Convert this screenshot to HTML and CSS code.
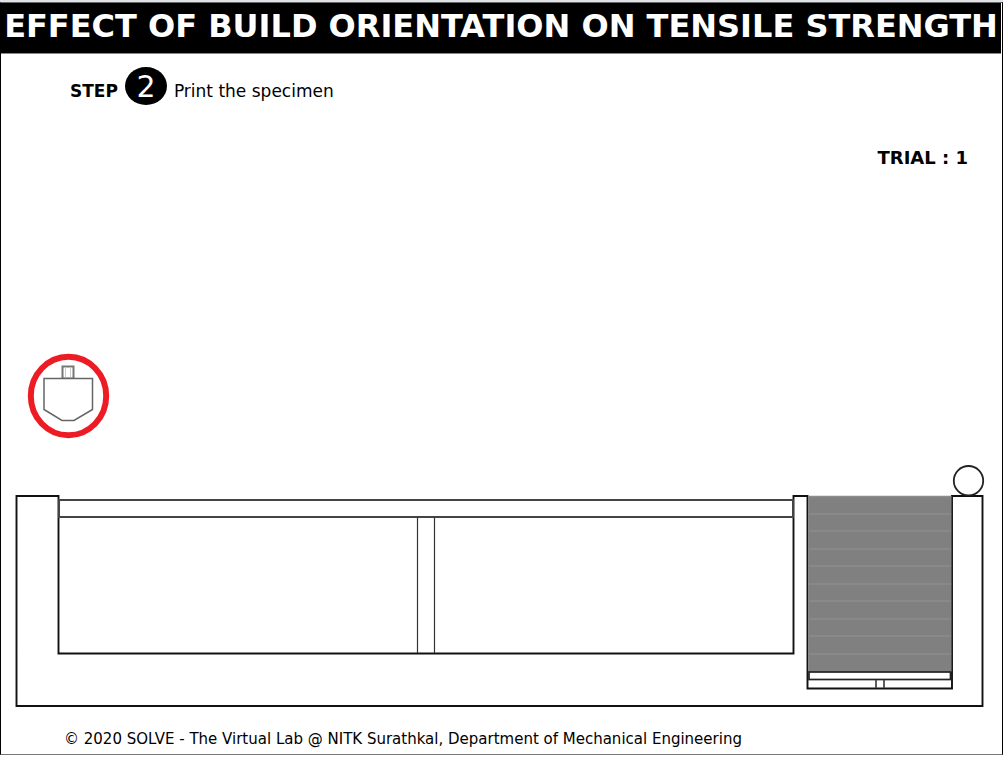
FILE: index.html
```html
<!DOCTYPE html>
<html lang="en">
<head>
<meta charset="utf-8">
<title>Effect of Build Orientation on Tensile Strength</title>
<link rel="stylesheet" href="styles.css">
</head>
<body>
<div class="lab">
  <header class="lab-header"><h1 class="lab-title">EFFECT OF BUILD ORIENTATION ON TENSILE STRENGTH</h1></header>
  <main class="lab-main">
    <div class="step">
      <strong class="step-label">STEP</strong>
      <span class="step-number">2</span>
      <span class="step-text">Print the specimen</span>
    </div>
    <p class="trial">TRIAL : 1</p>
    <svg class="printer" viewBox="0 340 1001 375" role="img" aria-label="Powder bed printer with print head, build chamber, powder supply and roller">
      <g fill="#fff" stroke="#666" stroke-width="1.5">
        <rect x="61.5" y="366.5" width="11" height="12" stroke="#777" stroke-width="2"/>
        <path d="M64.5 367V378M69.500 367V378" stroke="#ccc" stroke-width="1"/>
        <path d="M43 378.500H91.500V409.500L73 420.500H61L43 409.500Z"/>
      </g>
      <ellipse cx="67.500" cy="396" rx="37.700" ry="39.200" fill="none" stroke="#ed1c24" stroke-width="6"/>
      <path d="M15.500 496H57.500V653.500H792.500V496H806.500V688.500H951V496H981.500V706H15.500Z" fill="#fff" stroke="#111" stroke-width="1.900"/>
      <g fill="#fff" stroke="#444" stroke-width="2">
        <rect x="58" y="500" width="734" height="17"/>
        <path d="M416.500 517V653M433.500 517V653" stroke="#333" stroke-width="1.200"/>
      </g>
      <rect x="807.500" y="496" width="143" height="176" fill="#808080"/>
      <path d="M808 496.500H950M808 514H950M808 531H950M808 549H950M808 566H950M808 584H950M808 601H950M808 619H950M808 636H950M808 654H950" stroke="#8c8c8c" stroke-width="1.500"/>
      <g fill="#fff" stroke="#222" stroke-width="1.700">
        <rect x="808" y="672" width="141.500" height="7.500"/>
        <path d="M875 680V688M883 680V688" stroke="#444"/>
      </g>
      <circle cx="967.500" cy="480.700" r="14.700" fill="#fff" stroke="#222" stroke-width="1.800"/>
    </svg>
  </main>
  <footer class="lab-footer">© 2020 SOLVE - The Virtual Lab @ NITK Surathkal, Department of Mechanical Engineering</footer>
</div>
</body>
</html>
```
FILE: styles.css
```css
* { box-sizing: border-box; }
body {
  margin: 0;
  border-top: 2px solid #dfe3e7;
  background: #fff;
  color: #000;
  font-family: Verdana, "DejaVu Sans", sans-serif;
}
.lab {
  border: 1px solid #000;
  border-top-color: #666;
  border-bottom-color: #777;
}
.lab-header {
  height: 51px;
  background: #000;
  color: #fff;
  border-bottom: 1px solid #888;
  margin-right: 1px;
}
.lab-title {
  margin: 0;
  font-size: 32px;
  line-height: 46px;
  text-align: center;
  white-space: nowrap;
}
.step {
  display: flex;
  align-items: baseline;
  gap: 7px;
  padding: 13px 69px 0;
  font-size: 17px;
}
.step-number {
  width: 42px;
  height: 38px;
  border-radius: 50%;
  background: #000;
  color: #fff;
  font-size: 30px;
  line-height: 40px;
  text-align: center;
}
.trial {
  margin: 41px 34px 0;
  font-size: 18px;
  line-height: 24px;
  font-weight: bold;
  text-align: right;
}
.printer {
  display: block;
  width: 100%;
  margin-top: 170px;
}
.lab-footer {
  padding: 14px 63px 5px;
  font-size: 15px;
  line-height: 20px;
}
```
